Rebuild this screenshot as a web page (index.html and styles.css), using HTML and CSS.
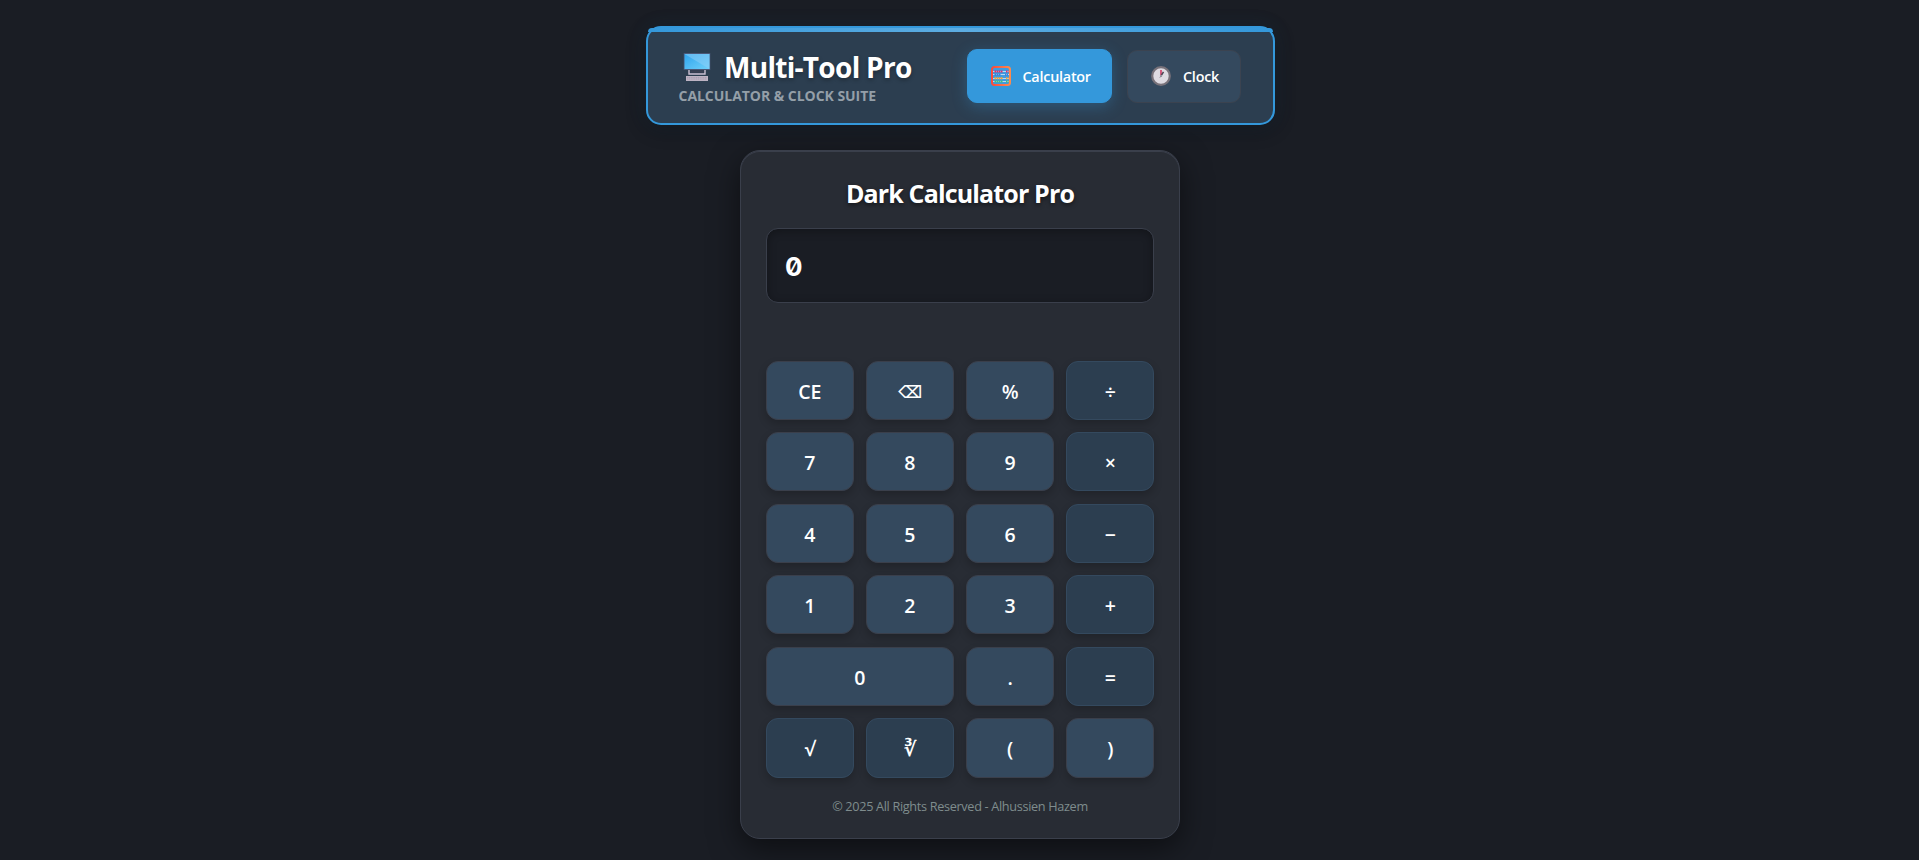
FILE: index.html
```html
<!DOCTYPE html>
<html lang="en">
<head>
<meta charset="utf-8">
<title>Multi-Tool Pro</title>
<link rel="stylesheet" href="styles.css">
</head>
<body>
<header class="header">
  <div class="brand">
    <h1 class="brand-title">
      <svg class="brand-icon" width="28" height="30" viewBox="0 0 28 30">
        <defs><linearGradient id="screen" x1="0" y1="0" x2="1" y2="1"><stop offset="0" stop-color="#2fa4ec"/><stop offset="1" stop-color="#6fd0fb"/></linearGradient></defs>
        <rect x="0.7" y="1" width="26.600" height="17" fill="#4b5878"/>
        <rect x="1.500" y="2" width="25" height="15" fill="url(#screen)"/>
        <path d="M1.500 2H26.500V17Z" fill="#8ccdf8" opacity=".55"/>
        <path d="M6 18v4h16v-4" fill="none" stroke="#c9c0d2" stroke-width="1.400"/>
        <path d="M7.500 18.500h13v2h-13z" fill="#3a3f52"/>
        <rect x="3" y="24" width="22" height="5" fill="#bdb3c3"/>
        <path d="M4 25.500h20M4 27h20" stroke="#9c92a6" stroke-width=".6" stroke-dasharray="1.200 .6"/>
      </svg>
      <span>Multi-Tool Pro</span>
    </h1>
    <p class="brand-sub">CALCULATOR &amp; CLOCK SUITE</p>
  </div>
  <nav class="nav">
    <button class="tab tab-active">
      <svg width="20" height="20" viewBox="0 0 20 20">
        <defs><linearGradient id="frame" x1="0" x2="1"><stop offset="0" stop-color="#fb4a3c"/><stop offset="1" stop-color="#ff8a4d"/></linearGradient></defs>
        <rect x="1" y="1" width="18" height="18" rx="2.500" fill="#3f9be0" stroke="url(#frame)" stroke-width="2"/>
        <path d="M2 5.500h16M2 8.500h16M2 12.500h16M2 15.500h16" stroke="#b9d9f2" stroke-width="1"/>
        <g stroke-width="2" stroke-dasharray="1.500 .5">
          <path d="M3.500 5.500h8.500M15 5.500h2.500" stroke="#d8336e"/>
          <path d="M3.500 8.700h6.500M14 8.700h3" stroke="#3f7fd8"/>
          <path d="M3.500 12.200h8.500M15 12.200h2.500" stroke="#f6a536"/>
          <path d="M3.500 15.500h8.500M15 15.500h2.500" stroke="#45c07c"/>
        </g>
      </svg>
      <span>Calculator</span>
    </button>
    <button class="tab">
      <svg width="20" height="20" viewBox="0 0 20 20">
        <circle cx="10" cy="10" r="8.800" fill="#dedbe2" stroke="#78727a" stroke-width="2.200"/>
        <path d="M10 9V4" stroke="#d02f5c" stroke-width="1.500"/>
        <path d="M10.500 9L12.500 5.800" stroke="#4b4553" stroke-width="1.500"/>
        <path d="M10 10L8.600 12" stroke="#aaa4ae" stroke-width="1"/>
        <circle cx="10" cy="10" r="1.100" fill="#8c8591"/>
      </svg>
      <span>Clock</span>
    </button>
  </nav>
</header>
<main class="card">
  <h2 class="card-title">Dark Calculator Pro</h2>
  <div class="display">0</div>
  <div class="keys">
    <button class="key">CE</button><button class="key key-erase">⌫</button><button class="key">%</button><button class="key op">÷</button>
    <button class="key">7</button><button class="key">8</button><button class="key">9</button><button class="key op">×</button>
    <button class="key">4</button><button class="key">5</button><button class="key">6</button><button class="key op">−</button>
    <button class="key">1</button><button class="key">2</button><button class="key">3</button><button class="key op">+</button>
    <button class="key wide">0</button><button class="key">.</button><button class="key op">=</button>
    <button class="key op">√</button><button class="key op">∛</button><button class="key">(</button><button class="key">)</button>
  </div>
  <footer class="footer">© 2025 All Rights Reserved - Alhussien Hazem</footer>
</main>
</body>
</html>
```
FILE: styles.css
```css
* { box-sizing: border-box; }
body {
  margin: 0;
  height: 860px;
  overflow: hidden;
  padding: 26px 0 0 1px;
  display: flex;
  flex-direction: column;
  align-items: center;
  gap: 25px;
  background: #1a1d24;
  color: #fff;
  font-family: "Open Sans", "Noto Sans", sans-serif;
}
.header {
  position: relative;
  width: 629px;
  height: 99px;
  flex: none;
  display: flex;
  justify-content: space-between;
  align-items: flex-start;
  padding: 21px 32px 0 31px;
  border: 2px solid #3498db;
  border-radius: 15px;
  background: #2c3e50;
  box-shadow: 0 4px 20px rgba(0, 0, 0, .3), 0 0 20px rgba(52, 152, 219, .1);
}
.header::before {
  content: "";
  position: absolute;
  top: 0;
  left: 0;
  right: 0;
  height: 4px;
  border-radius: 15px 15px 0 0;
  background: linear-gradient(90deg, #3498db, #5dade2, #3498db);
}
.brand-title {
  margin: -1px 0 0;
  display: flex;
  align-items: center;
  gap: 13px;
  height: 38px;
  padding-left: 4.500px;
  font-size: 28px;
  font-weight: 700;
  line-height: 38px;
  letter-spacing: -.7px;
  white-space: nowrap;
  text-shadow: 0 2px 4px rgba(0, 0, 0, .3);
}
.brand-icon { margin-top: 0; }
.brand-sub {
  margin: 0;
  font-size: 14px;
  font-weight: 700;
  line-height: 19px;
  letter-spacing: -.04px;
  color: #949fa8;
  white-space: nowrap;
}
.nav { display: flex; align-items: center; gap: 15px; }
.tab {
  display: flex;
  align-items: center;
  gap: 12px;
  height: 53px;
  width: 114px;
  padding: 0 0 0 23.500px;
  border: 1px solid #3b4350;
  border-radius: 10px;
  background: #34495e;
  color: #fff;
  font: 600 14.400px "Open Sans", "Noto Sans", sans-serif;
  letter-spacing: -.25px;
}
.tab svg { flex: none; }
.tab-active {
  width: 145px;
  height: 54px;
  padding-left: 23px;
  border-color: #3498db;
  background: #3498db;
  box-shadow: 0 4px 15px rgba(52, 152, 219, .3);
}
.card {
  width: 440px;
  height: 689px;
  flex: none;
  padding: 25px;
  border: 1px solid #3a3f4b;
  border-radius: 20px;
  background: #282c34;
  box-shadow: 0 10px 30px rgba(0, 0, 0, .5), inset 0 1px 0 #3a3f4b;
}
.card-title {
  margin: -1px 0 0;
  height: 53px;
  text-align: center;
  font-size: 25px;
  font-weight: 700;
  line-height: 36px;
  letter-spacing: -.85px;
  text-shadow: 0 2px 4px rgba(0, 0, 0, .5);
}
.display {
  height: 75px;
  padding: 0 18px;
  border: 1px solid #3a3f4b;
  border-radius: 12px;
  background: #1a1d24;
  box-shadow: inset 0 2px 10px rgba(0, 0, 0, .3);
  font: 700 26px/75px Inter, sans-serif;
  font-feature-settings: "zero";
}
.keys {
  margin-top: 58px;
  display: grid;
  grid-template-columns: repeat(4, 1fr);
  grid-template-rows: repeat(5, 59px) 60px;
  gap: 12.400px 12.600px;
}
.key {
  padding: 2px 0 0;
  border: 1px solid #3a3f4b;
  border-radius: 12px;
  background: #34495e;
  color: #fff;
  font: 600 19.500px "Open Sans", "Noto Sans", "DejaVu Sans", sans-serif;
  box-shadow: 0 4px 8px rgba(0, 0, 0, .2);
}
.key-erase { font-size: 17px; }
.op { background: #2c3e50; border-color: #34495e; }
.wide { grid-column: span 2; }
.footer {
  margin-top: 18px;
  text-align: center;
  font-size: 12.700px;
  line-height: 20px;
  letter-spacing: -.33px;
  color: #7f8c8d;
}
```
